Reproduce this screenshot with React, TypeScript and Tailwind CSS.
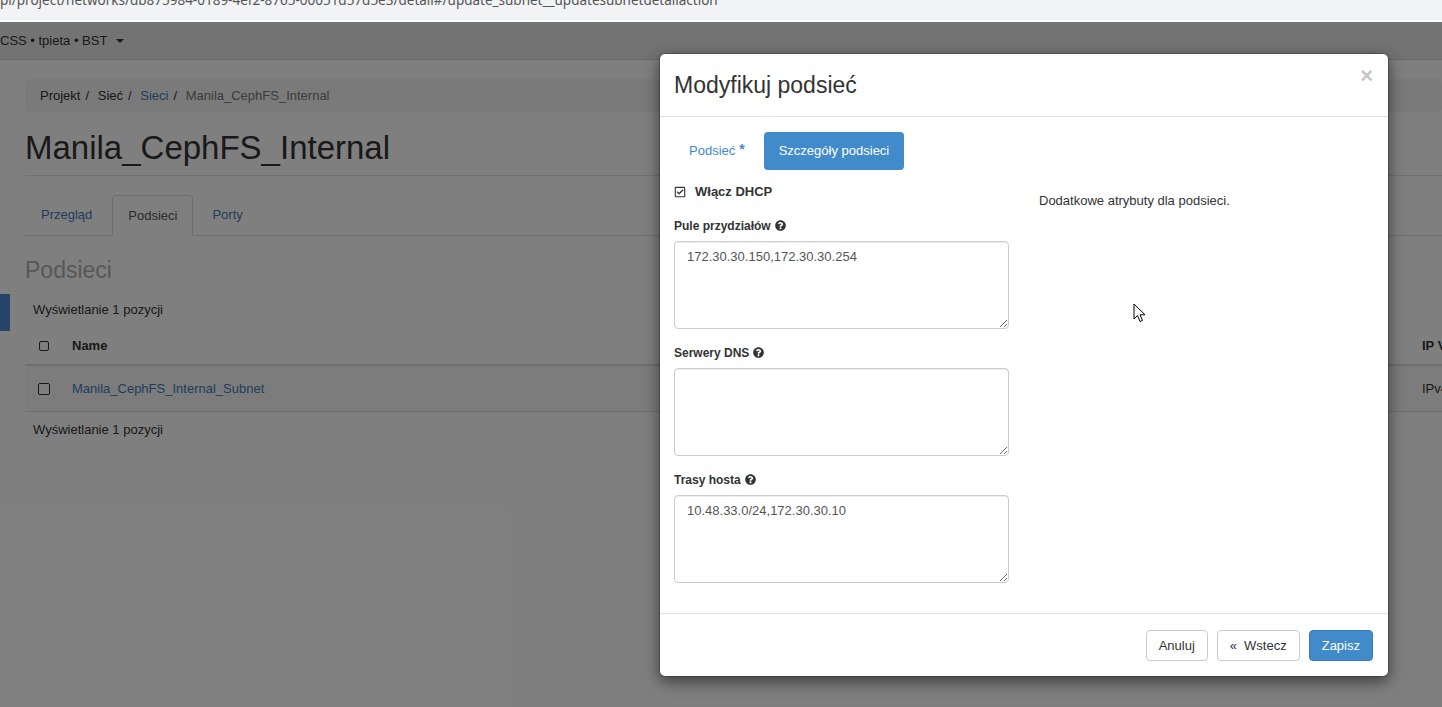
import React from "react";
import { FaQuestionCircle, FaRegCheckSquare } from "react-icons/fa";

function Help() {
  return <FaQuestionCircle className="inline-block ml-[4px] text-[11px] text-[#333] -mt-[2px]" />;
}

function Field({ label, value }: { label: string; value: string }) {
  return (
    <div className="mb-[15px]">
      <div className="h-[18px] leading-[18px] text-[12px] font-bold text-[#333] mb-[6px] flex items-center">
        {label}
        <Help />
      </div>
      <textarea
        readOnly
        defaultValue={value}
        className="block w-[335px] h-[88px] border border-[#ccc] rounded-[4px] px-[12px] pt-[6px] text-[13px] leading-[18px] text-[#555] shadow-[inset_0_1px_1px_rgba(0,0,0,0.075)] outline-none"
      />
    </div>
  );
}

function Box() {
  return <div className="w-[10px] h-[10px] border border-[#333] rounded-[2px]" />;
}

function Sep() {
  return <span className="px-[5px] text-[#333]">/{"\u00a0"}</span>;
}

export default function App() {
  return (
    <div className="w-[1442px] h-[707px] overflow-hidden relative bg-white font-['Liberation_Sans',Arial,sans-serif] text-[#333]">
      {/* browser url bar */}
      <div className="h-[20px] bg-[#f1f3f4] overflow-hidden">
        <div className="-mt-[10px] whitespace-nowrap text-[13.5px] leading-[20px] text-[#555] font-['Noto_Sans',Roboto,sans-serif]">
          pl/project/networks/db875984-0189-4ef2-8765-00051d57d5e3/detail#/update_subnet__updatesubnetdetailaction
        </div>
      </div>
      <div className="h-[2px] bg-white" />

      {/* page viewport */}
      <div className="relative h-[685px] overflow-hidden">
        {/* top nav */}
        <div className="h-[38px] bg-[#e6e6e6] border-b border-[#cfcfcf] flex items-center text-[13px] text-[#333] whitespace-nowrap">
          <span>CSS • tpieta • BST</span>
          <span className="ml-[9px] w-0 h-0 border-l-[4px] border-r-[4px] border-t-[4px] border-l-transparent border-r-transparent border-t-[#333]" />
        </div>

        <div className="relative">
          <div className="absolute left-0 top-[234px] w-[10px] h-[37px] bg-[#4a8ad0]" />
          <div className="pl-[25px] pt-[19px]">
            {/* breadcrumb */}
            <div className="h-[33px] bg-[#f5f5f5] rounded-[4px] px-[15px] flex items-center text-[13px] whitespace-nowrap">
              <span className="text-[#333]">Projekt</span>
              <Sep />
              <span className="text-[#333]">Sieć</span>
              <Sep />
              <span className="text-[#3e7bb6]">Sieci</span>
              <Sep />
              <span className="text-[#777]">Manila_CephFS_Internal</span>
            </div>

            {/* title */}
            <div className="mt-[18px] pb-[9px] border-b border-[#e5e5e5]">
              <h1 className="text-[33px] leading-[36px] text-[#333] whitespace-nowrap">Manila_CephFS_Internal</h1>
            </div>

            {/* tabs */}
            <div className="mt-[19px] h-[41px] border-b border-[#ddd] flex text-[13px]">
              <div className="h-[40px] px-[16px] flex items-center text-[#3e7bb6]">Przegląd</div>
              <div className="ml-[4px] h-[41px] px-[15px] flex items-center bg-white border border-[#ddd] border-b-white rounded-t-[4px] text-[#555]">
                Podsieci
              </div>
              <div className="h-[40px] px-[19px] flex items-center text-[#3e7bb6]">Porty</div>
            </div>

            {/* subnets */}
            <h3 className="mt-[22px] text-[23px] leading-[24px] text-[#b0b0b0]">Podsieci</h3>
            <div className="mt-[20px] pl-[8px] text-[13px] leading-[16px]">Wyświetlanie 1 pozycji</div>

            <div className="mt-[10px] w-[1500px] text-[13px]">
              <div className="grid grid-cols-[47px_1350px_103px] h-[38px] items-center border-b-2 border-[#ddd]">
                <div className="pl-[14px]"><Box /></div>
                <div className="font-bold">Name</div>
                <div className="font-bold whitespace-nowrap">IP Version</div>
              </div>
              <div className="grid grid-cols-[47px_1350px_103px] h-[46px] items-center border-b border-[#ddd] bg-[#f9f9f9]">
                <div className="pl-[13px]"><div className="w-[12px] h-[12px] border border-[#333] rounded-[2px] bg-white" /></div>
                <div className="text-[#3e7bb6]">Manila_CephFS_Internal_Subnet</div>
                <div className="text-[#333]">IPv4</div>
              </div>
              <div className="mt-[10px] pl-[8px] leading-[16px]">Wyświetlanie 1 pozycji</div>
            </div>
          </div>
        </div>

        {/* overlay */}
        <div className="absolute inset-0 bg-black/50" />

        {/* modal */}
        <div className="absolute left-[659px] top-[31px] w-[730px] bg-white rounded-[6px] border border-black/20 shadow-[0_5px_15px_rgba(0,0,0,0.5)] bg-clip-padding">
          <div className="h-[63px] px-[14px] flex items-center justify-between border-b border-[#e5e5e5]">
            <h4 className="text-[23px] leading-[32px] text-[#333]">Modyfikuj podsieć</h4>
            <span className="text-[22px] font-bold leading-none text-[#c6c6c6] -mt-[18px] mr-[1px]">×</span>
          </div>

          <div className="px-[14px] pt-[15px] pb-[15px]">
            <div className="flex items-center h-[38px] text-[13px]">
              <div className="h-[38px] px-[15px] flex items-center text-[#428bca]">
                Podsieć<sup className="ml-[4px] text-[14px] font-bold relative top-[-2px]">*</sup>
              </div>
              <div className="ml-[4px] h-[38px] px-[15px] flex items-center bg-[#428bca] text-white rounded-[4px]">
                Szczegóły podsieci
              </div>
            </div>

            <div className="flex mt-[13px]">
              <div className="w-[335px]">
                <div className="h-[18px] flex items-center mb-[16px]">
                  <FaRegCheckSquare className="text-[12px] text-[#333]" />
                  <span className="ml-[9px] text-[13px] font-bold text-[#333]">Włącz DHCP</span>
                </div>
                <Field label="Pule przydziałów" value="172.30.30.150,172.30.30.254" />
                <Field label="Serwery DNS" value="" />
                <Field label="Trasy hosta" value="10.48.33.0/24,172.30.30.10" />
              </div>
              <div className="ml-[30px] w-[335px] pt-[9px] text-[13px] leading-[18px] text-[#333]">
                Dodatkowe atrybuty dla podsieci.
              </div>
            </div>
          </div>

          <div className="border-t border-[#e5e5e5] px-[15px] pt-[16px] pb-[15px] flex justify-end gap-[9px] text-[13px]">
            <button className="h-[31px] px-[12px] border border-[#ccc] rounded-[4px] bg-white text-[#333]">Anuluj</button>
            <button className="h-[31px] px-[12px] border border-[#ccc] rounded-[4px] bg-white text-[#333] flex items-center">
              <span>«</span>
              <span className="ml-[7px]">Wstecz</span>
            </button>
            <button className="h-[31px] px-[12px] border border-[#357ebd] rounded-[4px] bg-[#428bca] text-white">Zapisz</button>
          </div>
        </div>

        {/* mouse cursor */}
        <svg className="absolute left-[1133px] top-[281px]" width="14" height="21" viewBox="0 0 14 21">
          <path d="M1 1 L1 16 L4.5 12.5 L7 18.5 L9.5 17.5 L7 11.8 L12 11.8 Z" fill="white" stroke="black" strokeWidth="1" strokeLinejoin="round" />
        </svg>
      </div>
    </div>
  );
}
